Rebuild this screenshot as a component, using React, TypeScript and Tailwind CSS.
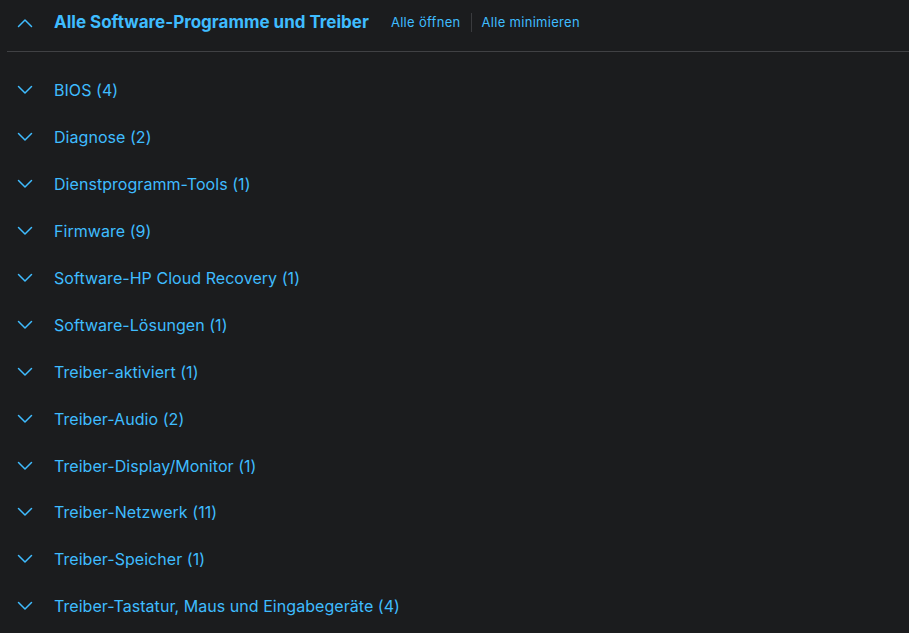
import React from 'react';

const categories = [
  'BIOS (4)',
  'Diagnose (2)',
  'Dienstprogramm-Tools (1)',
  'Firmware (9)',
  'Software-HP Cloud Recovery (1)',
  'Software-Lösungen (1)',
  'Treiber-aktiviert (1)',
  'Treiber-Audio (2)',
  'Treiber-Display/Monitor (1)',
  'Treiber-Netzwerk (11)',
  'Treiber-Speicher (1)',
  'Treiber-Tastatur, Maus und Eingabegeräte (4)',
];

function Chevron({ up = false }: { up?: boolean }) {
  return (
    <svg width="16" height="10" viewBox="0 0 16 10" fill="none" className="shrink-0">
      <path
        d={up ? 'M1.5 8.5 L8 2 L14.5 8.5' : 'M1.5 1.5 L8 8 L14.5 1.5'}
        stroke="#3fbcff"
        strokeWidth="1.5"
        strokeLinecap="round"
        strokeLinejoin="round"
      />
    </svg>
  );
}

export default function App() {
  return (
    <div
      className="min-h-screen w-full bg-[#1b1c1e] text-[#3fbcff] overflow-hidden"
      style={{ fontFamily: 'Inter, "Liberation Sans", sans-serif' }}
    >
      <div className="flex items-center h-[44px] pl-[17px] pt-px">
        <Chevron up />
        <h2 className="ml-[21px] text-[17px] font-bold">Alle Software-Programme und Treiber</h2>
        <button className="ml-[22px] text-[13px] tracking-[0.3px]">Alle öffnen</button>
        <div className="mx-[10px] w-px h-[19px] bg-[#3a3b3e]" />
        <button className="text-[13px] tracking-[0.3px]">Alle minimieren</button>
      </div>
      <div className="ml-[7px] mt-[7px] border-t border-[#404144]" />
      <div className="pt-[15px]">
        {categories.map((c) => (
          <div key={c} className="flex items-center h-[46.9px] pl-[17px]">
            <Chevron />
            <span className="ml-[21px] text-[16px] tracking-[0.05px]">{c}</span>
          </div>
        ))}
      </div>
    </div>
  );
}
